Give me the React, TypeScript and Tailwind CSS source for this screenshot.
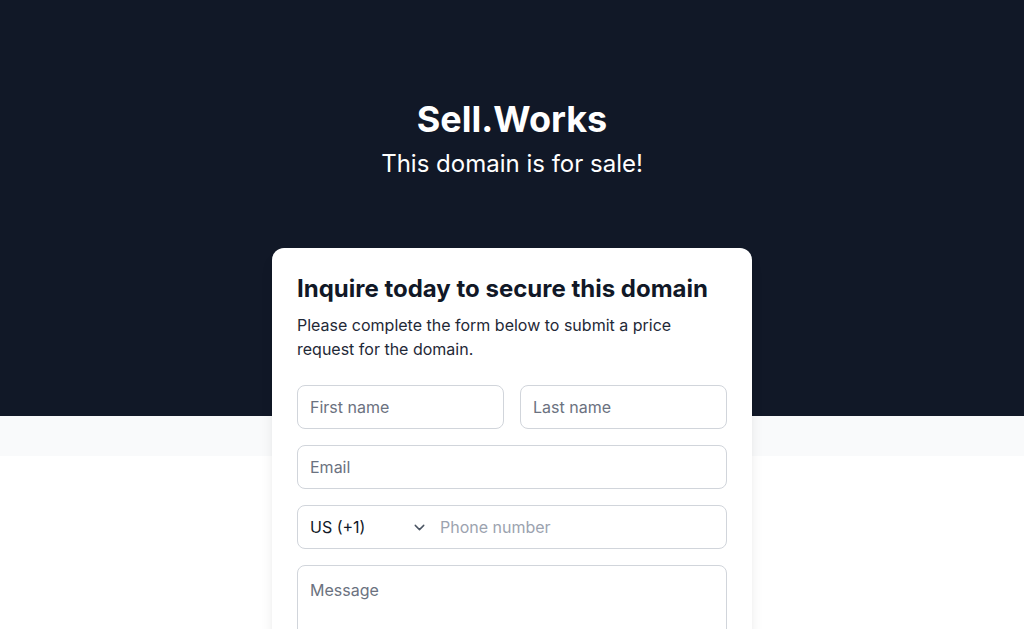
import { ChevronDown } from "lucide-react";

export default function App() {
  return (
    <div className="min-h-screen w-full bg-white font-['Inter','Noto_Sans',sans-serif]">
      {/* Hero */}
      <section className="bg-[#111827] pt-[99px] pb-[236px] text-center text-white">
        <h1 className="text-4xl font-bold leading-10">Sell.Works</h1>
        <p className="mt-[9px] text-2xl leading-8">This domain is for sale!</p>
      </section>

      {/* Form area */}
      <section className="flow-root bg-[linear-gradient(to_bottom,#f9fafb_0px,#f9fafb_40px,#ffffff_40px)] pb-16">
        <div className="relative z-10 mx-auto -mt-[168px] w-[480px] rounded-xl bg-white px-[25px] pt-[25px] pb-6 shadow-lg">
          <h2 className="text-2xl font-bold leading-8 text-[#111827]">
            Inquire today to secure this domain
          </h2>
          <p className="mt-2 text-base leading-6 text-[#1f2937]">
            Please complete the form below to submit a price request for the domain.
          </p>

          <form className="mt-6 flex flex-col gap-4">
            <div className="grid grid-cols-2 gap-4">
              <input
                placeholder="First name"
                className="h-11 rounded-lg border border-[#d1d5db] px-3 text-base text-[#111827] placeholder:text-[#6b7280] outline-none"
              />
              <input
                placeholder="Last name"
                className="h-11 rounded-lg border border-[#d1d5db] px-3 text-base text-[#111827] placeholder:text-[#6b7280] outline-none"
              />
            </div>
            <input
              placeholder="Email"
              className="h-11 rounded-lg border border-[#d1d5db] px-3 text-base text-[#111827] placeholder:text-[#6b7280] outline-none"
            />
            <div className="flex h-11 items-center rounded-lg border border-[#d1d5db]">
              <div className="flex w-[134px] items-center justify-between pl-3 pr-[4px] text-base text-[#111827]">
                <span>US (+1)</span>
                <ChevronDown size={17} strokeWidth={2} className="text-[#4b5563]" />
              </div>
              <input
                placeholder="Phone number"
                className="h-full flex-1 rounded-r-lg pl-[8px] text-base text-[#111827] placeholder:text-[#9ca3af] outline-none"
              />
            </div>
            <textarea
              placeholder="Message"
              rows={4}
              className="resize-none rounded-lg border border-[#d1d5db] px-3 py-3 text-base text-[#111827] placeholder:text-[#6b7280] outline-none"
            />
          </form>
        </div>
      </section>
    </div>
  );
}
